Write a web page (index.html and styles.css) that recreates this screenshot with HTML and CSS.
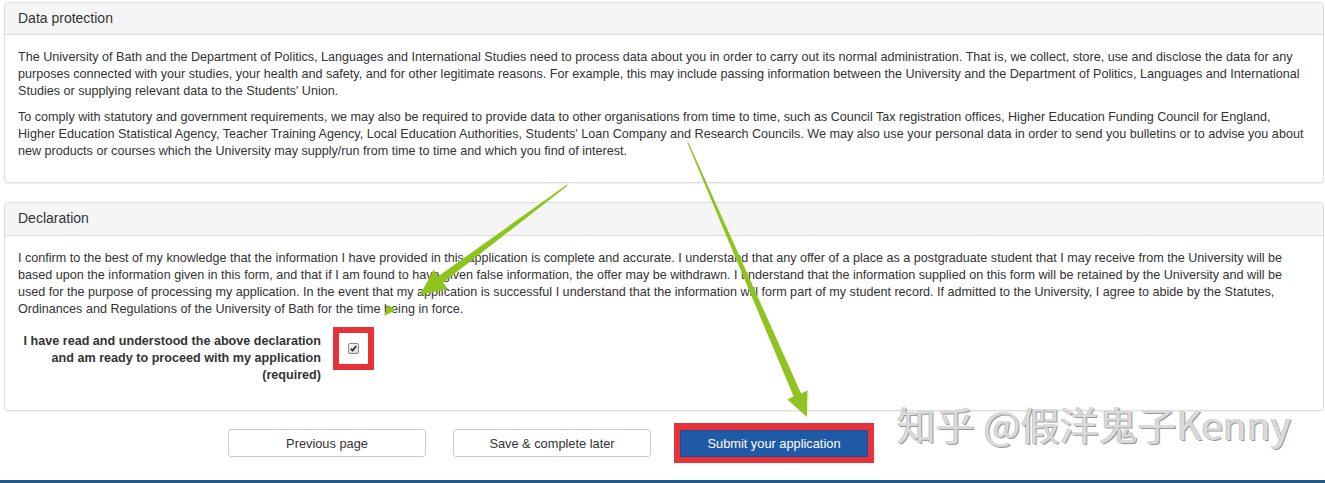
FILE: index.html
```html
<!DOCTYPE html>
<html>
<head>
<meta charset="utf-8">
<link rel="stylesheet" href="styles.css">
</head>
<body>
<div class="page">
  <section class="panel">
    <div class="panel-heading">Data protection</div>
    <div class="panel-body">
      <p>The University of Bath and the Department of Politics, Languages and International Studies need to process data about you in order to carry out its normal administration. That is, we collect, store, use and disclose the data for any purposes connected with your studies, your health and safety, and for other legitimate reasons. For example, this may include passing information between the University and the Department of Politics, Languages and International Studies or supplying relevant data to the Students' Union.</p>
      <p>To comply with statutory and government requirements, we may also be required to provide data to other organisations from time to time, such as Council Tax registration offices, Higher Education Funding Council for England, Higher Education Statistical Agency, Teacher Training Agency, Local Education Authorities, Students' Loan Company and Research Councils. We may also use your personal data in order to send you bulletins or to advise you about new products or courses which the University may supply/run from time to time and which you find of interest.</p>
    </div>
  </section>
  <section class="panel panel-second">
    <div class="panel-heading">Declaration</div>
    <div class="panel-body">
      <p>I confirm to the best of my knowledge that the information I have provided in this application is complete and accurate. I understand that any offer of a place as a postgraduate student that I may receive from the University will be based upon the information given in this form, and that if I am found to have given false information, the offer may be withdrawn. I understand that the information supplied on this form will be retained by the University and will be used for the purpose of processing my application. In the event that my application is successful I understand that the information will form part of my student record. If admitted to the University, I agree to abide by the Statutes, Ordinances and Regulations of the University of Bath for the time being in force.</p>
      <div class="form-row">
        <label class="decl-label" for="agree">I have read and understood the above declaration and am ready to proceed with my application (required)</label>
        <span class="highlight-box">
          <span class="check" id="agree" role="checkbox" aria-checked="true">
            <svg width="7" height="7" viewBox="0 0 7 7"><path d="M0.8 3.8 L2.6 5.6 L6.2 1" fill="none" stroke="#222" stroke-width="1.6"/></svg>
          </span>
        </span>
      </div>
    </div>
  </section>
  <div class="actions">
    <button class="btn">Previous page</button>
    <button class="btn">Save &amp; complete later</button>
    <span class="highlight-btn"><button class="btn btn-primary">Submit your application</button></span>
  </div>
  <div class="watermark">知乎 @假洋鬼子Kenny</div>
  <div class="footer-bar"></div>
  <svg class="arrows" width="1325" height="483" viewBox="0 0 1325 483">
    <polygon fill="#8fc31f" points="567,184.5 438.4,276.2 433.6,269.8 420,295 448,289 443.2,282.6 567.5,185.8"/>
    <polygon fill="#8fc31f" points="384,316 388,305 396,310"/>
    <polygon fill="#8fc31f" points="687.4,143 793.7,396.6 787.3,399.4 807,417 807.5,390.6 801.1,393.4 688.6,142.8"/>
  </svg>
</div>
</body>
</html>
```

FILE: styles.css
```css
html, body {
  margin: 0;
  padding: 0;
  background: #ffffff;
}
body {
  font-family: "Liberation Sans", Arial, sans-serif;
  font-size: 12.6px;
  line-height: 17px;
  color: #333333;
}
.page {
  position: relative;
  width: 1325px;
  height: 483px;
  overflow: hidden;
  padding: 2px 1px 0 4px;
  box-sizing: border-box;
}
.panel {
  border: 1px solid #dddddd;
  border-radius: 4px;
  background: #fff;
  box-shadow: 0 1px 1px rgba(0,0,0,0.05);
}
.panel-second {
  margin-top: 19px;
}
.panel-heading {
  background: #f5f5f5;
  border-bottom: 1px solid #dddddd;
  border-radius: 3px 3px 0 0;
  padding: 5px 13px 6px;
  font-size: 14px;
  line-height: 20px;
  color: #333;
}
.panel-second .panel-heading {
  padding-bottom: 7px;
}
.panel-body {
  padding: 14px 13px 13px;
}
.panel-body p {
  margin: 0 0 9px;
}
.form-row {
  display: flex;
  align-items: flex-start;
  padding-bottom: 13px;
}
.decl-label {
  width: 303px;
  text-align: right;
  font-weight: bold;
  padding-top: 6px;
  box-sizing: border-box;
  padding-left: 0;
}
.highlight-box {
  display: flex;
  align-items: center;
  justify-content: center;
  width: 29px;
  height: 31px;
  border: 6px solid #e8323a;
  margin-left: 12px;
}
.check {
  display: flex;
  align-items: center;
  justify-content: center;
  width: 9px;
  height: 9px;
  border: 1px solid #8a8a8a;
  border-radius: 2px;
  background: linear-gradient(#f4f4f4, #d8d8d8);
}
.actions {
  display: flex;
  align-items: center;
  margin-top: 12px;
  padding-left: 224px;
}
.btn {
  font-family: "Liberation Sans", Arial, sans-serif;
  font-size: 12.8px;
  color: #333;
  background: #fff;
  border: 1px solid #cccccc;
  border-radius: 3px;
  height: 28px;
  width: 198px;
  padding: 0;
  margin-right: 27px;
}
.highlight-btn {
  display: flex;
  border: 6px solid #e8323a;
  border-top-width: 7px;
  margin-left: -4px;
}
.btn-primary {
  margin: 0;
  width: 188px;
  height: 27px;
  background: #1f5aa6;
  border: 1px solid #1b4f93;
  border-radius: 0;
  color: #fff;
}
.watermark {
  position: absolute;
  left: 897px;
  top: 397px;
  font-family: "Noto Sans CJK SC", "Liberation Sans", sans-serif;
  font-size: 39px;
  line-height: 52px;
  color: #dadada;
  text-shadow: 1px 1px 0 #999999, -1px 0 0 #cacaca;
  white-space: nowrap;
}
.footer-bar {
  position: absolute;
  left: 0;
  right: 0;
  top: 480px;
  height: 3px;
  background: #1f5b8c;
}
.arrows {
  position: absolute;
  left: 0;
  top: 0;
  pointer-events: none;
}
```
